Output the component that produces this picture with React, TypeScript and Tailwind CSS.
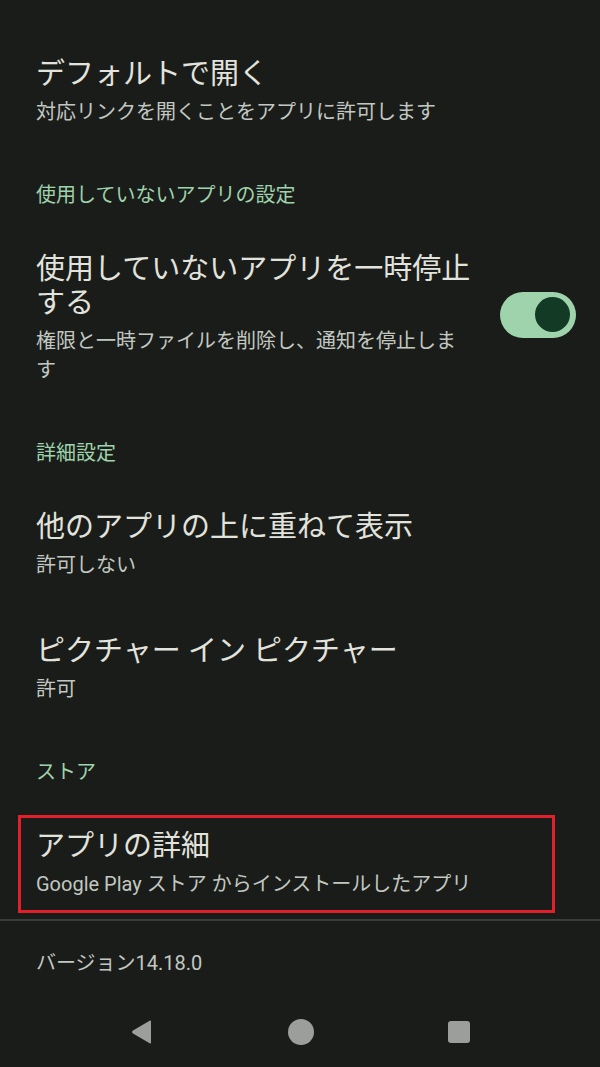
const font = "font-['Roboto','Noto_Sans_CJK_JP',sans-serif]";

function SectionHeader({ children }: { children: string }) {
	return (
		<div className="px-9 pt-[27px] pb-4 text-[20px] leading-[28px] text-[#9ed3ab]">
			{children}
		</div>
	);
}

function Item({
	title,
	summary,
	toggle,
	highlighted,
	last,
}: {
	title: string;
	summary: string;
	toggle?: boolean;
	highlighted?: boolean;
	last?: boolean;
}) {
	return (
		<div
			className={`relative flex items-center pt-[27px] pr-6 pl-9 ${last ? "pb-5" : "pb-[27px]"}`}
		>
			<div className={toggle ? "w-[438px]" : "flex-1"}>
				<div className="text-[29px] leading-[34px] text-[#e2e3dd]">{title}</div>
				<div className="mt-[7px] text-[20px] leading-[29px] text-[#c2c8c1]">{summary}</div>
			</div>
			{toggle && (
				<div className="-mt-2 ml-auto flex h-[46px] w-[76px] shrink-0 items-center justify-end rounded-full bg-[#9ed3ab] pr-[6px]">
					<div className="size-[35px] rounded-full bg-[#133a24]" />
				</div>
			)}
			{highlighted && (
				<div className="pointer-events-none absolute top-[13px] right-[45px] bottom-[6px] left-[18px] border-[3px] border-[#e2202b]" />
			)}
		</div>
	);
}

export default function App() {
	return (
		<div className={`${font} flex h-[1067px] w-[600px] flex-col bg-[#1a1c1a]`}>
			<div className="flex-1 pt-[30px]">
				<Item
					title="デフォルトで開く"
					summary="対応リンクを開くことをアプリに許可します"
				/>
				<SectionHeader>使用していないアプリの設定</SectionHeader>
				<Item
					title="使用していないアプリを一時停止する"
					summary="権限と一時ファイルを削除し、通知を停止します"
					toggle
				/>
				<SectionHeader>詳細設定</SectionHeader>
				<Item title="他のアプリの上に重ねて表示" summary="許可しない" />
				<Item title="ピクチャー イン ピクチャー" summary="許可" />
				<SectionHeader>ストア</SectionHeader>
				<Item
					title="アプリの詳細"
					summary="Google Play ストア からインストールしたアプリ"
					highlighted
					last
				/>
				<div className="h-[2px] bg-[#3a3e3b]" />
				<div className="px-9 pt-[28px] text-[20px] leading-[29px] text-[#c2c8c1]">
					バージョン14.18.0
				</div>
			</div>
			<div className="flex h-[70px] items-center justify-center gap-[134px]">
				<svg width="24" height="26" viewBox="0 0 24 26">
					<path
						d="M21 2.5 L21 23.5 Q21 25 19.6 24.2 L2.6 14.2 Q1.4 13 2.6 11.8 L19.6 1.8 Q21 1 21 2.5 Z"
						fill="#9c9e9c"
					/>
				</svg>
				<div className="size-[26px] rounded-full bg-[#9c9e9c]" />
				<div className="size-[22px] rounded-[3px] bg-[#9c9e9c]" />
			</div>
		</div>
	);
}
